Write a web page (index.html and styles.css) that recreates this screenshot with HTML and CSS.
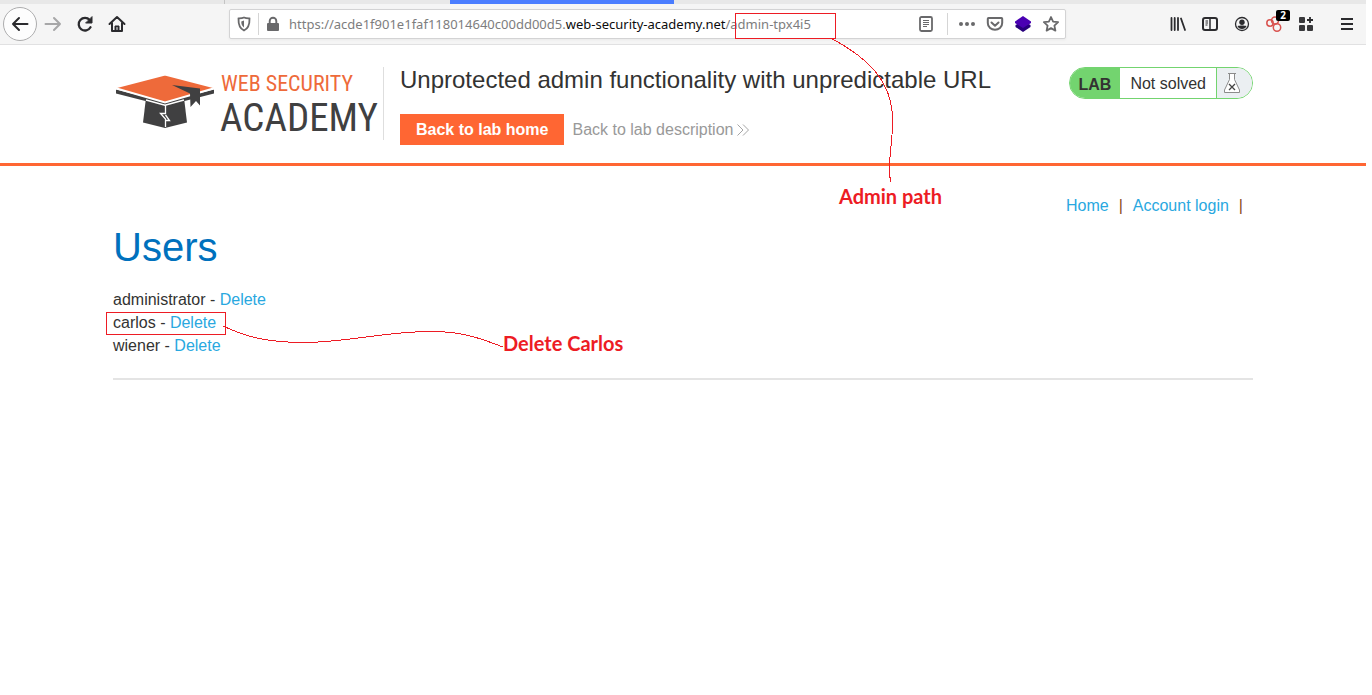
FILE: index.html
```
<!DOCTYPE html>
<html lang="en">
<head>
<meta charset="utf-8">
<title>Unprotected admin functionality with unpredictable URL</title>
<link rel="stylesheet" href="styles.css">
</head>
<body>
<div class="browser">
  <div class="tabstrip"><span class="tab-edge"></span><span class="tab-active"></span></div>
  <div class="toolbar">
    <div class="nav-buttons">
      <button class="tool back" aria-label="Back"><svg width="18" height="18" viewBox="0 0 18 18" fill="none" stroke="#2b2b2e" stroke-width="2" stroke-linecap="round" stroke-linejoin="round"><path d="M16.500 9H2M8 3L2 9l6 6"/></svg></button>
      <button class="tool" aria-label="Forward"><svg width="18" height="18" viewBox="0 0 18 18" fill="none" stroke="#a7a7a8" stroke-width="2" stroke-linecap="round" stroke-linejoin="round"><path d="M1.500 9H16M10 3l6 6-6 6"/></svg></button>
      <button class="tool" aria-label="Reload"><svg width="18" height="18" viewBox="0 0 18 18" fill="none" stroke="#2b2b2e" stroke-width="2.300" stroke-linecap="round"><path d="M14.500 12.300A6.300 6.300 0 1 1 13.700 5"/><path d="M16 2v6h-6z" fill="#2b2b2e" stroke-width="1" stroke-linejoin="round"/></svg></button>
      <button class="tool" aria-label="Home"><svg width="18" height="18" viewBox="0 0 18 18" fill="none" stroke="#2b2b2e" stroke-width="2" stroke-linecap="round" stroke-linejoin="round"><path d="M1.500 9L9 2l7.500 7M4 8v8h10V8"/><path d="M7 16v-5h4v5z" fill="#2b2b2e" stroke-width="1"/><path d="M9 12.500v2" stroke="#f5f5f5" stroke-width="1"/></svg></button>
    </div>
    <div class="urlbar">
      <svg width="16" height="16" viewBox="0 0 16 16" fill="none" stroke="#69696b" stroke-width="1.800"><path d="M8 1.500c2 .900 4 .900 5.500 1 .200 6-1 10-5.500 12C3.500 12.500 2.300 8.500 2.500 2.500 4 2.400 6 2.400 8 1.500z"/><path d="M8 4.500v7c-2-1.500-2.700-3-2.700-6z" fill="#69696b" stroke="none"/></svg>
      <span class="divider"></span>
      <svg width="16" height="16" viewBox="0 0 16 16"><rect x="2" y="7" width="12" height="8" rx="1" fill="#69696b"/><path d="M4.700 8V5a3.300 3.300 0 0 1 6.600 0v3" fill="none" stroke="#69696b" stroke-width="1.900"/></svg>
      <div class="url" role="textbox" aria-label="Address" contenteditable="true" spellcheck="false">https://acde1f901e1faf118014640c00dd00d5.<span class="host">web-security-academy.net</span>/admin-tpx4i5</div>
      <svg width="16" height="16" viewBox="0 0 16 16" fill="none" stroke="#69696b"><rect x="2" y="1" width="12" height="14" rx="1.500" stroke-width="1.800"/><path d="M5 4.500h6M5 6.500h6M5 8.500h6M5 10.500h4"/></svg>
      <span class="divider wide"></span>
      <button class="mini" aria-label="Page actions"><svg width="18" height="16" viewBox="0 0 18 16" fill="#69696b"><circle cx="3" cy="8" r="2"/><circle cx="9" cy="8" r="2"/><circle cx="15" cy="8" r="2"/></svg></button>
      <button class="mini" aria-label="Save to Pocket"><svg width="18" height="16" viewBox="0 0 18 16" fill="none" stroke="#69696b" stroke-width="2" stroke-linecap="round" stroke-linejoin="round"><path d="M2.500 2h13a.700.700 0 0 1 .700.700V7c0 9-14.400 9-14.400 0V2.700A.700.700 0 0 1 2.500 2z"/><path d="M5.500 6.500L9 9.700l3.500-3.200"/></svg></button>
      <button class="mini" aria-label="Layers"><svg width="18" height="16" viewBox="0 0 18 16"><path d="M1.500 9L9 5l7.500 4v2L9 16l-7.500-5z" fill="#28007c"/><path d="M1 5.500L9 0l8 5.500v1.500L9 12 1 7z" fill="#4a00b3"/></svg></button>
      <button class="mini" aria-label="Bookmark"><svg width="18" height="16" viewBox="0 0 18 16" fill="none" stroke="#69696b" stroke-width="1.800" stroke-linejoin="round"><path d="M9 1l2.100 4.600 5 .600-3.700 3.400 1 5L9 12.100l-4.400 2.500 1-5L1.900 6.200l5-.600z"/></svg></button>
    </div>
    <div class="tool-buttons">
      <button class="tool" aria-label="Library"><svg width="16" height="16" viewBox="0 0 16 16" stroke="#2b2b2e" stroke-width="1.800" stroke-linecap="round"><path d="M1.500 2v12M4.700 2v12M8 2v12M11 2.500l4 11.500"/></svg></button>
      <button class="tool" aria-label="Sidebars"><svg width="16" height="16" viewBox="0 0 16 16" fill="none" stroke="#2b2b2e"><rect x="1" y="2" width="14" height="12" rx="2" stroke-width="2"/><path d="M8 2v12" stroke-width="1.500"/><path d="M3.500 5h2.500M3.500 7h2.500M3.500 9h2"/></svg></button>
      <button class="tool" aria-label="Account"><svg width="16" height="16" viewBox="0 0 16 16"><circle cx="8" cy="8" r="6.500" fill="none" stroke="#2b2b2e" stroke-width="1.300"/><circle cx="8" cy="6.200" r="2.700" fill="#2b2b2e"/><path d="M3.500 10c2-.800 7-.800 9 0-1 4-8 4-9 0z" fill="#2b2b2e"/></svg></button>
      <button class="tool badge-host" aria-label="Containers"><svg width="16" height="16" viewBox="0 0 16 16" fill="none" stroke="#d9534f" stroke-width="1.500"><circle cx="4" cy="7" r="3.200"/><circle cx="11" cy="11.500" r="3.700"/><circle cx="9" cy="4.500" r="3.500"/></svg><span class="badge">2</span></button>
      <button class="tool" aria-label="Extensions"><svg width="16" height="16" viewBox="0 0 16 16" fill="#38383b"><rect x="1" y="1" width="6" height="6" rx="1"/><rect x="1" y="9" width="6" height="6" rx="1"/><rect x="9" y="9" width="6" height="6" rx="1"/><path d="M12 1v6M9 4h6" stroke="#2b2b2e" stroke-width="1.800"/></svg></button>
      <button class="tool menu" aria-label="Menu"><svg width="16" height="16" viewBox="0 0 16 16" stroke="#2b2b2e" stroke-width="2"><path d="M2 3h12M2 8h12M2 13h12"/></svg></button>
    </div>
  </div>
</div>

<header class="lab-header">
  <div class="container lab-row">
    <a class="logo" href="#" aria-label="Web Security Academy">
      <svg width="270" height="73" viewBox="0 0 270 73">
        <path d="M3 22.500L52 35l49-12.500v4L52 39 3 26.500z" fill="#404041"/>
        <path d="M33 31h38l3 24.500L52 61l-22-5.500z" fill="#404041"/>
        <path d="M33 33l19 5.200L71 33" fill="none" stroke="#fff" stroke-width="1.500"/>
        <path d="M1 20.700L52 7.500l51 13.200L52 35.500z" fill="#ee6a3a" stroke="#fff" stroke-width="2"/>
        <path d="M59 18l28 3.500v17l-4-4.500-5.500 6-.500-13.500z" fill="#404041"/>
        <path d="M52.500 38v8.500h-5l5 5.500v8M52.500 48l4 5.500h-4" fill="none" stroke="#fff" stroke-width="1.300"/>
        <text class="logo-small" x="108" y="24">WEB SECURITY</text>
        <text class="logo-big" x="107" y="64">ACADEMY</text>
      </svg>
    </a>
    <div class="lab-title">
      <h2>Unprotected admin functionality with unpredictable URL</h2>
      <div class="lab-links">
        <a class="lab-home" href="#">Back to lab home</a>
        <a class="lab-desc" href="#">Back to lab description <svg width="12" height="12" viewBox="0 0 12 12" fill="none" stroke="#a5a5a5"><path d="M.500.500L6 6 .500 11.500M6 .500L11.500 6 6 11.500"/></svg></a>
      </div>
    </div>
    <div class="status">
      <span class="status-lab">LAB</span>
      <span class="status-text">Not solved</span>
      <span class="status-icon"><svg width="18" height="22" viewBox="0 0 18 22" fill="none" stroke="#8b8b8b"><path d="M6.500 1.500v6L1.500 18v2.500h15V18l-5-10.500v-6" fill="#fff"/><path d="M5 1.500h8"/><path d="M6 12l6 6M12 12l-6 6" stroke="#444" stroke-width="1.300"/></svg></span>
    </div>
  </div>
</header>

<main class="container content">
  <nav class="links"><a href="#">Home</a><span>|</span><a href="#">Account login</a><span>|</span></nav>
  <h1>Users</h1>
  <ul class="users">
    <li>administrator - <a href="#">Delete</a></li>
    <li>carlos - <a href="#">Delete</a></li>
    <li>wiener - <a href="#">Delete</a></li>
  </ul>
  <hr>
</main>

<svg class="notes" width="1366" height="400" viewBox="0 0 1366 400">
  <g shape-rendering="crispEdges" fill="none" stroke="#ed1c24">
    <rect x="735.500" y="13.500" width="100" height="25"/>
    <rect x="106.500" y="312.500" width="119" height="22"/>
    <path d="M832.500 39C866 57 892.500 80 892.500 120C893 145 887 160 890.500 182"/>
    <path d="M223 326C240 334 260 342.500 305 342.500C350 342 385 331.500 430 331.500C460 331 480 338 503 347"/>
  </g>
  <text x="839" y="204">Admin path</text>
  <text x="503" y="351">Delete Carlos</text>
</svg>
</body>
</html>
```
FILE: styles.css
```
* { box-sizing: border-box; }
body {
  position: relative;
  margin: 0 6px 0 0;
  background: #fff;
  color: #333332;
  font: 16px/23px "Liberation Sans", Arial, sans-serif;
}
svg { display: block; flex: none; }
button { border: 0; padding: 0; background: none; font: inherit; }
a { color: #29a8df; text-decoration: none; }
h1, h2, ul { margin: 0; padding: 0; font-weight: 400; }

.browser { border-bottom: 1px solid #e1e1e2; background: #f5f5f5; }
.tabstrip { display: flex; height: 4px; background: #e8e8e8; }
.tab-edge { width: 225px; border-right: 1px solid #c4c4c4; }
.tab-active { width: 224px; margin-left: 225px; background: #4a7dff; }
.toolbar { display: flex; align-items: center; height: 40px; padding: 0 3px; }
.nav-buttons, .tool-buttons { display: flex; align-items: center; }
.tool { display: grid; place-items: center; width: 32px; height: 32px; }
.back {
  width: 34px;
  height: 34px;
  border: 1px solid #adadae;
  border-radius: 50%;
  background: #fdfdfd;
}
.urlbar {
  display: flex;
  flex: 1;
  align-items: center;
  height: 30px;
  margin: 0 96px;
  padding: 0 0 0 6px;
  border: 1px solid #d3d3d4;
  border-radius: 2px;
  background: #fff;
  box-shadow: 0 1px 3px #0000000d;
}
.divider { width: 1px; height: 22px; margin: 0 6px; background: #d5d5d5; }
.divider.wide { margin: 0 5px 0 13px; }
.url {
  flex: 1;
  margin-left: 8px;
  overflow: hidden;
  color: #7d7d7e;
  font: 13px/20px "Noto Sans", "Open Sans", sans-serif;
  white-space: nowrap;
}
.host { color: #0c0c0d; }
.mini { display: grid; place-items: center; width: 28px; height: 28px; }
.badge-host { position: relative; }
.badge {
  position: absolute;
  top: 2px;
  right: 0;
  width: 14px;
  border-radius: 2px;
  background: #000;
  color: #fff;
  font: 700 10px/11px "Open Sans", sans-serif;
  text-align: center;
}
.menu { margin-left: 9px; }

.container { max-width: 1140px; margin: 0 auto; }
.lab-header { border-bottom: 3px solid #ff6633; }
.lab-row { display: flex; align-items: flex-start; padding: 22px 0 18px; }
.lab-row, .logo { min-height: 73px; }
.logo { margin-bottom: 5px; border-right: 1px solid #dedede; }
.lab-row .logo { height: 73px; }
.logo-small, .logo-big { font-family: "Roboto Condensed", "Liberation Sans Narrow", "Lato", sans-serif; }
.logo-small { font-size: 22px; fill: #ee6a3a; }
.logo-big { font-size: 39px; fill: #404041; }
.lab-title { flex: 1; padding-left: 16px; }
.lab-title h2 { font-size: 24px; line-height: 26px; }
.lab-links { display: flex; align-items: center; gap: 8px; margin-top: 21px; }
.lab-home { padding: 4px 16px; background: #ff6633; color: #fff; font-weight: 700; }
.lab-desc { display: flex; align-items: center; gap: 4px; color: #999; }
.status {
  display: flex;
  height: 32px;
  overflow: hidden;
  border: 1px solid #73d46f;
  border-radius: 16px;
  line-height: 31px;
}
.status-lab { padding: 1px 9px 0; background: #73d46f; font-weight: 700; }
.status-text { padding: 0 10px; }
.status-icon {
  display: grid;
  place-items: center;
  width: 36px;
  padding-right: 5px;
  border-left: 1px solid #73d46f;
  background: #ebeff2;
}

.content { padding-top: 28px; }
.links { display: flex; justify-content: flex-end; gap: 10px; padding-right: 10px; color: #8b4a1c; }
h1 { margin-top: 8px; color: #0071bd; font-size: 40px; line-height: 44px; }
.users { margin-top: 19px; list-style: none; }
hr { height: 2px; margin: 21px 0 0; border: 0; background: #e4e4e4; }

.notes { position: absolute; top: 0; left: 0; pointer-events: none; }
.notes text { fill: #ed1c24; font: 700 20px "Lato", sans-serif; }
```
